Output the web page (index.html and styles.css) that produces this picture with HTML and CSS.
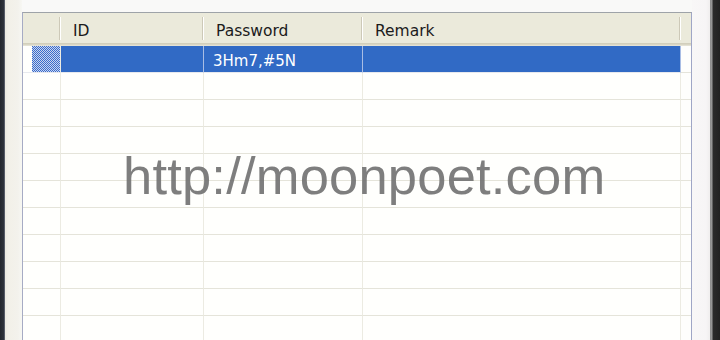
FILE: index.html
```html
<!DOCTYPE html>
<html>
<head>
<meta charset="utf-8">
<link rel="stylesheet" href="styles.css">
</head>
<body>
<div class="screen">
  <div class="edge-left"></div>
  <div class="pane-left"></div>
  <div class="main">
    <div class="topstrip"></div>
    <div class="list">
      <div class="row header">
        <div class="hcell"></div>
        <div class="hcell">ID</div>
        <div class="hcell">Password</div>
        <div class="hcell">Remark</div>
        <div class="hcell filler"></div>
      </div>
      <div class="row selected">
        <div class="cell indicator"></div>
        <div class="cell"></div>
        <div class="cell">3Hm7,#5N</div>
        <div class="cell"></div>
        <div class="cell filler"></div>
      </div>
      <div class="row"><div class="cell"></div><div class="cell"></div><div class="cell"></div><div class="cell"></div><div class="cell filler"></div></div>
      <div class="row"><div class="cell"></div><div class="cell"></div><div class="cell"></div><div class="cell"></div><div class="cell filler"></div></div>
      <div class="row"><div class="cell"></div><div class="cell"></div><div class="cell"></div><div class="cell"></div><div class="cell filler"></div></div>
      <div class="row"><div class="cell"></div><div class="cell"></div><div class="cell"></div><div class="cell"></div><div class="cell filler"></div></div>
      <div class="row"><div class="cell"></div><div class="cell"></div><div class="cell"></div><div class="cell"></div><div class="cell filler"></div></div>
      <div class="row"><div class="cell"></div><div class="cell"></div><div class="cell"></div><div class="cell"></div><div class="cell filler"></div></div>
      <div class="row"><div class="cell"></div><div class="cell"></div><div class="cell"></div><div class="cell"></div><div class="cell filler"></div></div>
      <div class="row"><div class="cell"></div><div class="cell"></div><div class="cell"></div><div class="cell"></div><div class="cell filler"></div></div>
      <div class="row"><div class="cell"></div><div class="cell"></div><div class="cell"></div><div class="cell"></div><div class="cell filler"></div></div>
      <div class="row"><div class="cell"></div><div class="cell"></div><div class="cell"></div><div class="cell"></div><div class="cell filler"></div></div>
      <div class="row"><div class="cell"></div><div class="cell"></div><div class="cell"></div><div class="cell"></div><div class="cell filler"></div></div>
    </div>
  </div>
  <div class="pane-right"></div>
  <div class="edge-right"></div>
  <div class="watermark">http://moonpoet.com</div>
</div>
</body>
</html>
```

FILE: styles.css
```css
html, body {
  margin: 0;
  padding: 0;
  background: #f8f8f6;
}
.screen {
  position: relative;
  display: flex;
  width: 720px;
  height: 340px;
  overflow: hidden;
  font-family: "DejaVu Sans", Verdana, sans-serif;
}
.edge-left {
  width: 5px;
  flex: none;
  background: linear-gradient(to right, #23272d 0, #2f343c 4px, #7d8290 5px);
}
.pane-left {
  width: 17px;
  flex: none;
  background: linear-gradient(to right, #ebe9e0 0, #f2f0e8 3px, #f3f2ec 13px, #f7f7f3 17px);
}
.main {
  width: 670px;
  flex: none;
  display: flex;
  flex-direction: column;
}
.topstrip {
  height: 12px;
  flex: none;
  background: #f9f9f8;
}
.list {
  flex: 1;
  border-top: 1px solid #9ea3a8;
  border-left: 1px solid #a6abc4;
  border-right: 1px solid #9fa6c6;
  background: #fffffd;
  overflow: hidden;
}
.row {
  display: grid;
  grid-template-columns: 38px 143px 159px 318px 10px;
  height: 27px;
}
.row.header {
  height: 33px;
  background: #ebeadb;
  box-shadow: inset 0 -1px 0 #e4e2d4, inset 0 -2px 0 #d9d6c4, inset 0 -3px 0 #d2cfbc;
}
.hcell {
  display: flex;
  align-items: center;
  padding-left: 12px;
  padding-top: 2px;
  font-size: 15.5px;
  color: #1b1b1b;
  background:
    linear-gradient(#cdc9b8, #cdc9b8) right 1px top 4px / 1px 23px no-repeat,
    linear-gradient(#ffffff, #ffffff) right 0 top 4px / 1px 23px no-repeat;
}
.hcell.filler {
  background: none;
  padding: 0;
}
.cell {
  box-sizing: border-box;
  border-right: 1px solid #ecebe2;
  border-bottom: 1px solid #e5e4da;
  display: flex;
  align-items: center;
  padding-left: 9px;
  padding-top: 4px;
  font-size: 15px;
}
.cell.filler {
  border-right: none;
  padding: 0;
  background: #fefefc;
}
.selected .cell {
  background: #316ac5;
  color: #ffffff;
  border-right-color: #a9bde4;
  border-bottom-color: #e7e9ee;
}
.selected .cell.indicator {
  padding: 0 0 0 9px;
  background: repeating-conic-gradient(#3a6ccb 0 25%, #c9d5ef 0 50%) 0 0 / 2px 2px;
  background-clip: content-box;
  border-right-color: #ecebe2;
}
.selected .cell.filler {
  background: #fefefc;
  border-bottom-color: #e5e4da;
}
.pane-right {
  width: 18px;
  flex: none;
  background: linear-gradient(to right, #f8f7f7 0, #f7f5f6 14px, #f0eeee 18px);
}
.edge-right {
  width: 10px;
  flex: none;
  background: linear-gradient(to right, #8c8c8c 0, #9a9a9a 2px, #2b2b2b 3px, #222222 10px);
}
.watermark {
  position: absolute;
  left: 123px;
  top: 150px;
  font-family: "Liberation Sans", Arial, sans-serif;
  font-size: 52.5px;
  line-height: 52px;
  letter-spacing: 0.2px;
  color: #747474;
  opacity: 0.92;
  white-space: nowrap;
}
```
